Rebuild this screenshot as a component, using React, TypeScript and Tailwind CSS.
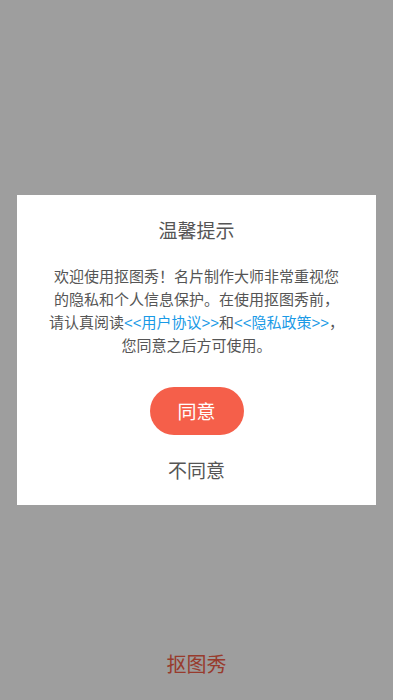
import React from "react";

const linkFont = { fontFamily: '"Liberation Sans", "Noto Sans CJK SC", sans-serif' };

const App: React.FC = () => {
  return (
    <div
      className="relative w-[393px] h-[700px] bg-white overflow-hidden flex flex-col justify-end items-center"
      style={{ fontFamily: '"Noto Sans CJK SC", "Noto Sans", sans-serif' }}
    >
      {/* page under the dialog */}
      <div className="pb-[22px] text-[20px] leading-[28px] text-[#f55f4a]">抠图秀</div>

      {/* overlay */}
      <div className="absolute inset-0 bg-black/[0.38] flex items-center justify-center">
        <div className="w-[359px] h-[310px] bg-white flex flex-col items-center">
          <div className="pt-[21px] text-[19px] leading-[28px] text-[#555555]">温馨提示</div>
          <p className="mt-[20px] text-center text-[15px] leading-[23px] text-[#555555] whitespace-nowrap">
            欢迎使用抠图秀！名片制作大师非常重视您
            <br />
            的隐私和个人信息保护。在使用抠图秀前，
            <br />
            请认真阅读
            <span className="text-[#1a9ae6] leading-[1]" style={linkFont}>
              &lt;&lt;用户协议&gt;&gt;
            </span>
            和
            <span className="text-[#1a9ae6] leading-[1]" style={linkFont}>
              &lt;&lt;隐私政策&gt;&gt;
            </span>
            ，
            <br />
            您同意之后方可使用。
          </p>
          <button className="mt-[31px] w-[94px] h-[48px] rounded-full bg-[#f55f4a] text-white text-[19px]">
            同意
          </button>
          <button className="mt-[21px] text-[19px] leading-[28px] text-[#555555]">不同意</button>
        </div>
      </div>
    </div>
  );
};

export default App;
